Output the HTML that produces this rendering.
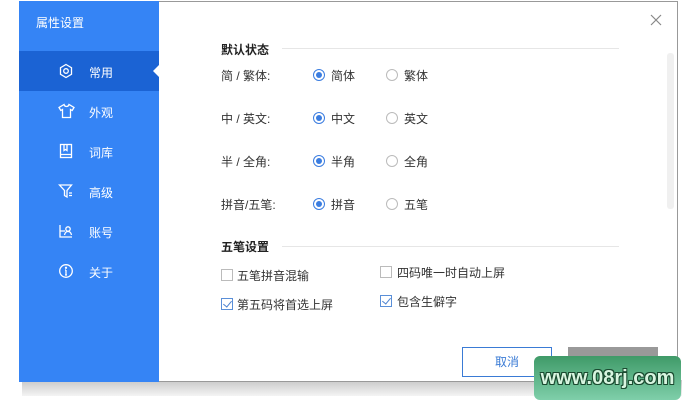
<!DOCTYPE html>
<html><head><meta charset="utf-8"><style>
*{margin:0;padding:0;box-sizing:border-box}
body{width:691px;height:410px;background:#fff;position:relative;overflow:hidden;font-family:"Liberation Sans","Noto Sans CJK SC",sans-serif;font-size:12px;color:#333}
.shadow{position:absolute;left:22px;top:380px;width:660px;height:16px;background:linear-gradient(#c8c8c8,#f4f4f4);}
.dlg{position:absolute;left:19px;top:1px;width:659px;height:381px;background:#fff;border:1px solid #999;border-left:none}
.side{position:absolute;left:19px;top:1px;width:140px;height:381px;background:#3584f5}
.title{position:absolute;left:17px;top:13px;color:#fff;font-size:12px}
.item{position:absolute;left:0;width:140px;height:40px;color:#fff;font-size:12px}
.item span{position:absolute;left:70px;top:13px}
.item svg{position:absolute;left:39px;top:12px}
.act{background:#1b63d4}
.act:after{content:"";position:absolute;right:0;top:14px;border:6px solid transparent;border-right-color:#fff}
.t{position:absolute;white-space:nowrap}
.h{font-weight:bold;color:#222}
.line{position:absolute;height:1px;background:#e6e6e6}
.r{position:absolute;width:12px;height:12px;border:1px solid #bbb;border-radius:50%}
.r.on{border-color:#3b7de0}
.r.on:after{content:"";position:absolute;left:2px;top:2px;width:6px;height:6px;border-radius:50%;background:#3b7de0}
.c{position:absolute;width:12px;height:12px;border:1px solid #bbb}
.c.on{border-color:#5a8fd8}
.c.on:after{content:"";position:absolute;left:3px;top:0px;width:4px;height:7px;border:solid #4a80d0;border-width:0 1px 1px 0;transform:rotate(40deg)}
</style></head><body>
<div class="shadow"></div>
<div class="dlg"></div>
<div class="side">
<div class="title">属性设置</div>
<div class="item act" style="top:50px"><svg width="16" height="16" viewBox="0 0 16 16" fill="none" stroke="#fff" stroke-width="1.3"><path d="M8 1.5l5.5 3.2v6.6L8 14.5 2.5 11.3V4.7z"/><circle cx="8" cy="8" r="2.3"/></svg><span>常用</span></div>
<div class="item" style="top:90px"><svg width="17" height="16" viewBox="0 0 17 16" fill="none" stroke="#fff" stroke-width="1.3"><path d="M6 1.5L1 4.5l1.8 3 1.7-1v8h8v-8l1.7 1 1.8-3-5-3c-.5 1.5-1.5 2-2.5 2S6.5 3 6 1.5z"/></svg><span>外观</span></div>
<div class="item" style="top:130px"><svg width="16" height="16" viewBox="0 0 16 16" fill="none" stroke="#fff" stroke-width="1.3"><rect x="2.5" y="1.5" width="11" height="13"/><path d="M2.5 11.5h11M6 1.5v6l1.5-1 1.5 1v-6"/></svg><span>词库</span></div>
<div class="item" style="top:170px"><svg width="16" height="16" viewBox="0 0 16 16" fill="none" stroke="#fff" stroke-width="1.3"><path d="M1.5 2h12l-4.5 5.5v6.5l-2.5-1.5V7.5z"/><path d="M11 10h3M11 12.5h3"/></svg><span>高级</span></div>
<div class="item" style="top:210px"><svg width="16" height="16" viewBox="0 0 16 16" fill="none" stroke="#fff" stroke-width="1.3"><path d="M2 2v12h12M2 8h5M5 2v0"/><circle cx="10" cy="6" r="2.2"/><path d="M6.5 12c.5-2.5 2-3.5 3.5-3.5s3 1 3.5 3.5"/></svg><span>账号</span></div>
<div class="item" style="top:250px"><svg width="16" height="16" viewBox="0 0 16 16" fill="none" stroke="#fff" stroke-width="1.3"><circle cx="8" cy="8" r="6.3"/><path d="M8 7v5M7 7h1M7 12h2"/><circle cx="8" cy="4.8" r=".5" fill="#fff"/></svg><span>关于</span></div>
</div>
<svg style="position:absolute;left:650px;top:14px" width="12" height="12" viewBox="0 0 12 12" stroke="#888" stroke-width="1.2"><path d="M1 1l10 10M11 1L1 11"/></svg>
<div style="position:absolute;left:667px;top:53px;width:7px;height:156px;background:#f0f0f0;border-radius:3px"></div>

<div class="t h" style="left:221px;top:41px">默认状态</div><div class="line" style="left:282px;top:48px;width:337px"></div>
<div class="t" style="left:221px;top:67px">简 / 繁体:</div>
<div class="t" style="left:221px;top:110px">中 / 英文:</div>
<div class="t" style="left:221px;top:153px">半 / 全角:</div>
<div class="t" style="left:221px;top:196px">拼音/五笔:</div>
<div class="r on" style="left:313px;top:69px"></div><div class="t" style="left:331px;top:67px">简体</div>
<div class="r" style="left:386px;top:69px"></div><div class="t" style="left:404px;top:67px">繁体</div>
<div class="r on" style="left:313px;top:112px"></div><div class="t" style="left:331px;top:110px">中文</div>
<div class="r" style="left:386px;top:112px"></div><div class="t" style="left:404px;top:110px">英文</div>
<div class="r on" style="left:313px;top:155px"></div><div class="t" style="left:331px;top:153px">半角</div>
<div class="r" style="left:386px;top:155px"></div><div class="t" style="left:404px;top:153px">全角</div>
<div class="r on" style="left:313px;top:198px"></div><div class="t" style="left:331px;top:196px">拼音</div>
<div class="r" style="left:386px;top:198px"></div><div class="t" style="left:404px;top:196px">五笔</div>

<div class="t h" style="left:221px;top:238px">五笔设置</div><div class="line" style="left:282px;top:246px;width:337px"></div>
<div class="c" style="left:221px;top:269px"></div><div class="t" style="left:237px;top:267px">五笔拼音混输</div>
<div class="c" style="left:380px;top:266px"></div><div class="t" style="left:397px;top:264px">四码唯一时自动上屏</div>
<div class="c on" style="left:221px;top:298px"></div><div class="t" style="left:237px;top:296px">第五码将首选上屏</div>
<div class="c on" style="left:380px;top:295px"></div><div class="t" style="left:397px;top:293px">包含生僻字</div>

<div style="position:absolute;left:462px;top:347px;width:90px;height:30px;border:1px solid #3a7bd5;color:#3a7bd5;text-align:center;line-height:28px">取消</div>
<div style="position:absolute;left:568px;top:347px;width:90px;height:30px;background:#999"></div>
<div style="position:absolute;left:534px;top:356px;width:147px;height:44px;border-radius:6px;background:linear-gradient(#3f9a68,#7fcfaa);color:#d8f5e0;font:bold 20px 'Liberation Sans',sans-serif;text-align:center;line-height:44px;text-shadow:1px 1px 0 #1a4a30,-1px -1px 0 #1a4a30,1px -1px 0 #1a4a30,-1px 1px 0 #1a4a30">www.08rj.com</div>
</body></html>
